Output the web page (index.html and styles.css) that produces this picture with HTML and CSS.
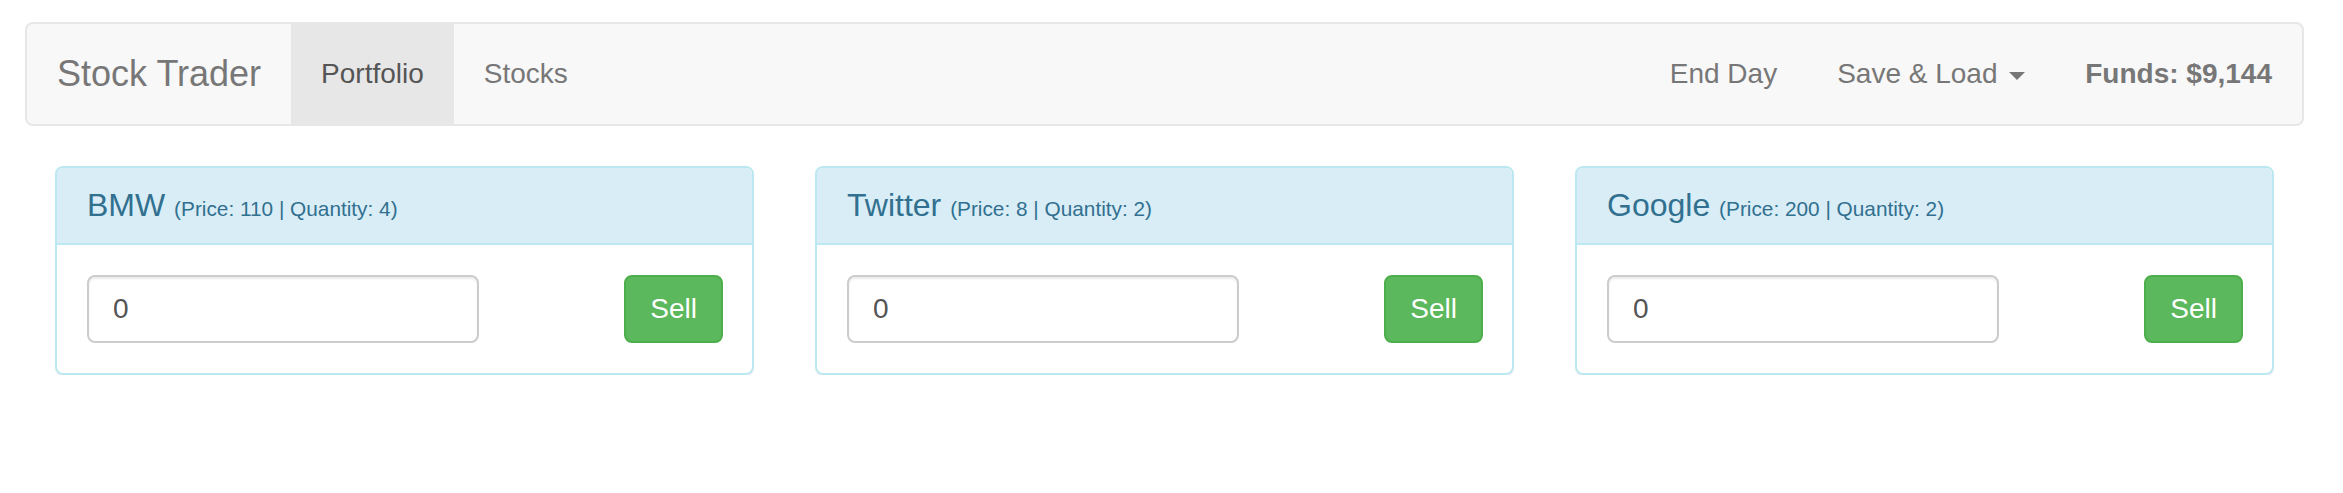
FILE: index.html
```html
<!DOCTYPE html>
<html lang="en">
<head>
<meta charset="utf-8">
<title>Stock Trader</title>
<link rel="stylesheet" href="styles.css">
</head>
<body>
<div class="page">
  <nav class="navbar">
    <a class="brand" href="#">Stock Trader</a>
    <ul class="nav">
      <li class="active"><a href="#">Portfolio</a></li>
      <li><a href="#">Stocks</a></li>
    </ul>
    <div class="nav-right">
      <ul class="nav">
        <li><a href="#">End Day</a></li>
        <li><a href="#">Save &amp; Load <span class="caret"></span></a></li>
      </ul>
      <p class="navbar-text">Funds: $9,144</p>
    </div>
  </nav>

  <div class="cards">
    <div class="panel">
      <div class="panel-heading">
        <h3 class="panel-title">BMW <small>(Price: 110 | Quantity: 4)</small></h3>
      </div>
      <div class="panel-body">
        <input class="form-control" type="number" value="0">
        <button class="btn-sell">Sell</button>
      </div>
    </div>
    <div class="panel">
      <div class="panel-heading">
        <h3 class="panel-title">Twitter <small>(Price: 8 | Quantity: 2)</small></h3>
      </div>
      <div class="panel-body">
        <input class="form-control" type="number" value="0">
        <button class="btn-sell">Sell</button>
      </div>
    </div>
    <div class="panel">
      <div class="panel-heading">
        <h3 class="panel-title">Google <small>(Price: 200 | Quantity: 2)</small></h3>
      </div>
      <div class="panel-body">
        <input class="form-control" type="number" value="0">
        <button class="btn-sell">Sell</button>
      </div>
    </div>
  </div>
</div>
</body>
</html>
```

FILE: styles.css
```css
* { box-sizing: border-box; }

html, body {
  margin: 0;
  padding: 0;
  background: #fff;
  font-family: "Liberation Sans", Arial, Helvetica, sans-serif;
  font-size: 28px;
  line-height: 40px;
  color: #333;
}

.page {
  padding: 22px 0 0 25px;
  width: 2343px;
}

/* ---------- navbar ---------- */
.navbar {
  display: flex;
  align-items: stretch;
  width: 2279px;
  height: 104px;
  background: #f8f8f8;
  border: 2px solid #e7e7e7;
  border-radius: 8px;
  padding: 0 30px 0 0;
  margin-bottom: 40px;
}

.brand {
  display: block;
  padding: 30px 30px;
  font-size: 36px;
  line-height: 40px;
  color: #777;
  text-decoration: none;
}

.nav {
  display: flex;
  margin: 0;
  padding: 0;
  list-style: none;
}

.nav li a {
  display: block;
  padding: 30px 30px;
  line-height: 40px;
  font-size: 28px;
  color: #777;
  text-decoration: none;
}

.nav li.active a {
  background: #e7e7e7;
  color: #555;
}

.nav-right {
  display: flex;
  margin-left: auto;
}

.caret {
  display: inline-block;
  width: 0;
  height: 0;
  margin-left: 4px;
  vertical-align: middle;
  border-top: 8px solid #777;
  border-left: 8px solid transparent;
  border-right: 8px solid transparent;
}

.navbar-text {
  margin: 30px 0 30px 30px;
  line-height: 40px;
  font-weight: bold;
  color: #777;
}

/* ---------- cards ---------- */
.cards {
  display: grid;
  grid-template-columns: 699px 699px 699px;
  column-gap: 61px;
  padding-left: 30px;
}

.panel {
  background: #fff;
  border: 2px solid #bce8f1;
  border-radius: 8px;
  box-shadow: 0 2px 2px rgba(0, 0, 0, 0.05);
}

.panel-heading {
  background: #d9edf7;
  color: #31708f;
  border-bottom: 2px solid #bce8f1;
  border-radius: 6px 6px 0 0;
  padding: 20px 30px 20px;
}

.panel-title {
  margin: 0;
  font-size: 32px;
  font-weight: 500;
  line-height: 35px;
  color: inherit;
}

.panel-title small {
  font-size: 65%;
  font-weight: 400;
  line-height: 1;
  color: inherit;
}

.panel-body {
  display: flex;
  justify-content: space-between;
  align-items: center;
  padding: 30px 29px 30px 30px;
}

.form-control {
  display: block;
  width: 392px;
  height: 68px;
  padding: 12px 24px;
  font-family: inherit;
  font-size: 28px;
  line-height: 40px;
  color: #555;
  background: #fff;
  border: 2px solid #ccc;
  border-radius: 8px;
  box-shadow: inset 0 2px 2px rgba(0, 0, 0, 0.075);
  outline: none;
  -moz-appearance: textfield;
}

.form-control::-webkit-outer-spin-button,
.form-control::-webkit-inner-spin-button {
  -webkit-appearance: none;
  margin: 0;
}

.btn-sell {
  display: block;
  height: 68px;
  padding: 12px 24px;
  font-family: inherit;
  font-size: 28px;
  line-height: 40px;
  color: #fff;
  background: #5cb85c;
  border: 2px solid #4cae4c;
  border-radius: 8px;
  cursor: pointer;
}
```
